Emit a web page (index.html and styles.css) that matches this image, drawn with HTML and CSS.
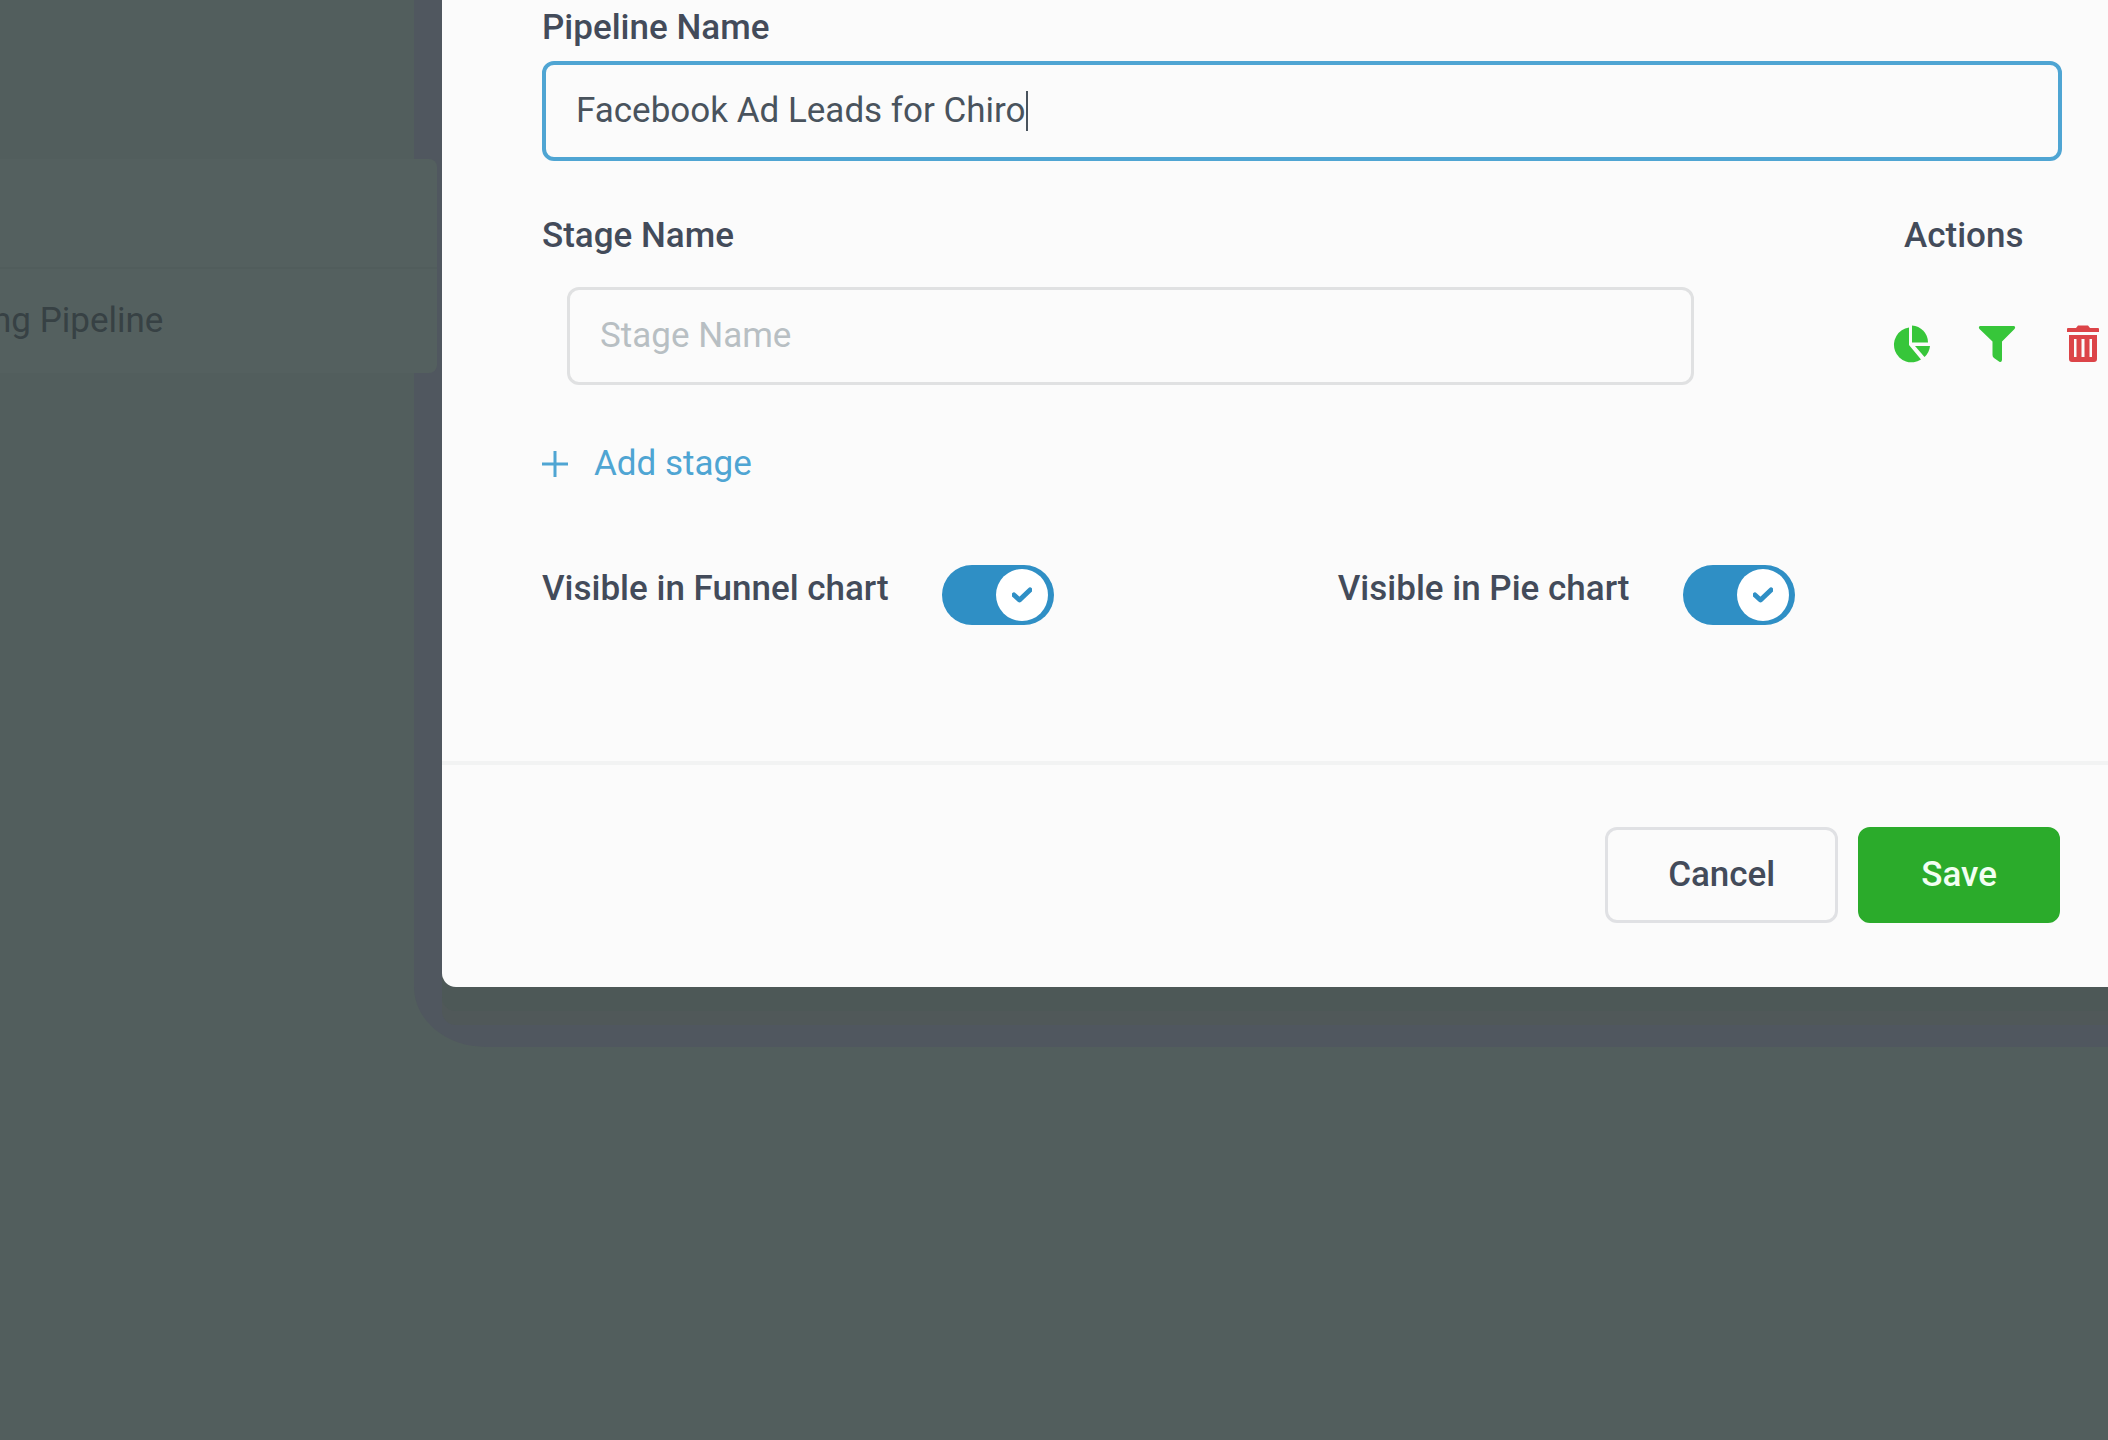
FILE: index.html
```html
<!DOCTYPE html>
<html lang="en">
	<head>
		<meta charset="utf-8">
		<title>Pipelines</title>
		<link rel="stylesheet" href="styles.css">
	</head>

	<body>
		<main class="page">
			<ul class="pipelines">
				<li></li>
				<li>ng Pipeline</li>
			</ul>
		</main>

		<section class="modal" role="dialog" aria-label="Pipeline">
			<form class="modal-body" id="PipelineForm">
				<label class="label" for="PipelineName">Pipeline Name</label>
				<div class="field focused">
					<input id="PipelineName" type="text" value="Facebook Ad Leads for Chiro">
					<span class="caret"></span>
				</div>

				<div class="stages">
					<label class="label" for="StageName">Stage Name</label>
					<span class="label actions-label">Actions</span>

					<div class="field stage">
						<input id="StageName" type="text" placeholder="Stage Name">
					</div>
					<div class="actions">
						<button type="button" class="icon green" aria-label="Pie chart">
							<svg viewBox="0 0 38 38">
								<path d="M17 2.500V20L29 34.500A17.500 17.500 0 1 1 17 2.500Z"/>
								<path d="M20 0.500A17 17 0 0 1 36 17.500H20Z"/>
								<path d="M23 21H38A17 17 0 0 1 32.500 32Z"/>
							</svg>
						</button>
						<button type="button" class="icon green" aria-label="Funnel chart">
							<svg viewBox="0 0 38 38">
								<path d="M2 1H36Q38 2 36.500 4L24 16.500V35Q23.500 38 21 36.500L16 33Q14.500 32 14.500 30V16.500L1.500 4Q0 2 2 1Z"/>
							</svg>
						</button>
						<button type="button" class="icon red" aria-label="Delete">
							<svg viewBox="0 0 38 38">
								<path fill-rule="evenodd" d="M5 10H33V34Q33 37 30 37H8Q5 37 5 34ZM10 14V32H12.500V14ZM17.500 14V32H20.500V14ZM25.500 14V32H28V14Z"/>
								<path d="M4 3H12L14 0.500H24L26 3H34Q35 3 35 4V7H3V4Q3 3 4 3Z"/>
							</svg>
						</button>
					</div>
				</div>

				<button type="button" class="add">
					<svg viewBox="0 0 26 26"><path d="M13 0V26M0 13H26"/></svg>
					Add stage
				</button>

				<div class="toggles">
					<label class="toggle">
						<span class="label">Visible in Funnel chart</span>
						<span class="switch">
							<input type="checkbox" checked>
							<svg viewBox="0 0 20 16"><path d="M2 8L7.500 13L18 3"/></svg>
						</span>
					</label>
					<label class="toggle">
						<span class="label">Visible in Pie chart</span>
						<span class="switch">
							<input type="checkbox" checked>
							<svg viewBox="0 0 20 16"><path d="M2 8L7.500 13L18 3"/></svg>
						</span>
					</label>
				</div>
			</form>

			<footer class="modal-footer">
				<button type="button" class="button">Cancel</button>
				<button type="submit" form="PipelineForm" class="button save">Save</button>
			</footer>
		</section>
	</body>
</html>
```

FILE: styles.css
```css
*, *::before {
	box-sizing: border-box;
}

body {
	margin: 0;
	background-color: #525e5d;
	color: #434b5a;
	font: 35px/40px Roboto, sans-serif;
}

input, button {
	font: inherit;
	color: inherit;
}

button {
	cursor: pointer;
}

/* scrolled a little to the left, under the modal */
.page {
	width: 437px;
	margin-left: -8px;
	padding-top: 159px;
}

/* sits above the modal's shadow */
.pipelines {
	position: relative;
	z-index: 0;
	margin: 0 -8px 0 0;
	padding: 0;
	list-style: none;
	border-radius: 0 8px 8px 0;
	background-color: #54605f;
	color: #374144;

	& > li {
		height: 108px;
		padding-block: 32px;
	}

	& > li + li {
		height: 106px;
		border-top: 2px solid #515d5c;
	}
}

.modal {
	position: absolute;
	top: 0;
	left: 442px;
	right: 0;
	background-color: #fbfbfb;
	border-bottom-left-radius: 14px;
	box-shadow: 0 24px #4d5857, 0 38px #505859;

	&::before {
		content: "";
		position: absolute;
		z-index: -1;
		inset: 0 0 -60px -28px;
		border-bottom-left-radius: 72px 60px;
		background-color: #50575f;
	}
}

.modal-body {
	padding: 8px 46px 136px 100px;
}

.label {
	display: block;
	font-weight: 500;
}

.field {
	display: flex;
	align-items: center;
	height: 98px;
	padding-inline: 30px;
	border: 3px solid #e0e1e2;
	border-radius: 12px;

	& > input {
		flex: 1;
		padding: 0;
		border: 0;
		outline: 0;
		background: none;
		color: #49535d;
	}

	& > input::placeholder {
		color: #b8bfc3;
	}

	&.focused {
		height: 100px;
		margin-block: 13px 55px;
		border: 4px solid #4fa5d3;
	}

	&.focused > input {
		flex: none;
		field-sizing: content;
	}
}

.caret {
	width: 2px;
	height: 40px;
	background-color: #49535d;
}

.stages {
	display: grid;
	grid-template-columns: 1fr 170px;
	gap: 31px 198px;
}

.actions-label {
	padding-left: 12px;
}

.stage {
	margin-left: 25px;
}

.actions {
	display: flex;
	align-items: center;
	gap: 48px;
	padding-top: 16px;
}

.icon {
	flex: none;
	padding: 0;
	border: 0;
	background: none;

	& > svg {
		display: block;
		width: 38px;
		height: 38px;
		fill: currentColor;
	}

	&.green { color: #37c63a; }
	&.red { color: #dc4448; }
}

.add {
	display: flex;
	align-items: center;
	gap: 26px;
	margin-block: 59px 81px;
	padding: 0;
	border: 0;
	background: none;
	color: #4fa5d3;

	& > svg {
		width: 26px;
		height: 26px;
		stroke: currentColor;
		stroke-width: 3;
	}
}

.toggles {
	display: flex;
	gap: 284px;
}

.toggle {
	display: flex;
	gap: 53px;

	& > .label {
		padding-top: 4px;
	}
}

.switch {
	display: grid;
	align-items: center;

	& > * {
		grid-area: 1 / 1;
	}

	& > input {
		appearance: none;
		width: 112px;
		height: 60px;
		margin: 0;
		padding: 4px 6px;
		border-radius: 30px;
		background-color: #2f8fc5;
	}

	& > input::before {
		content: "";
		display: block;
		width: 52px;
		height: 52px;
		margin-left: auto;
		border-radius: 50%;
		background-color: white;
	}

	& > svg {
		justify-self: end;
		width: 20px;
		height: 16px;
		margin-right: 22px;
		fill: none;
		stroke: #2f8fc5;
		stroke-width: 5;
		stroke-linecap: round;
		stroke-linejoin: round;
	}
}

.modal-footer {
	display: flex;
	justify-content: flex-end;
	gap: 20px;
	padding: 62px 48px 64px;
	border-top: 4px solid #f2f3f3;
}

.button {
	height: 96px;
	padding-inline: 60px;
	border: 3px solid #e0e1e4;
	border-radius: 12px;
	background-color: #fbfbfb;
	font-weight: 500;

	&.save {
		border-color: #2bab2b;
		background-color: #2bab2b;
		color: #f2fff2;
	}
}
```
